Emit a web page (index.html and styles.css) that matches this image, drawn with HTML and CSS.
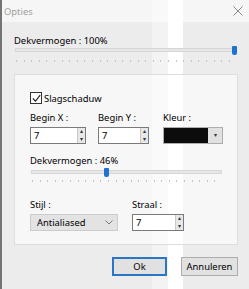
FILE: index.html
```html
<!DOCTYPE html>
<html>
<head>
    <title>Opties</title>
    <link rel="stylesheet" href="styles.css">
</head>
<body>
    <div class="window">
        <div class="titlebar">
            <span class="title">Opties</span>
            <svg class="close" width="10" height="10" viewBox="0 0 10 10">
                <path d="M0.5 0.5 L9.5 9.5 M9.5 0.5 L0.5 9.5" stroke="#8a8a8a" stroke-width="1" fill="none"/>
            </svg>
        </div>

        <div class="content">
            <div class="field-label">Dekvermogen : 100%</div>
            <div class="slider slider-wide">
                <div class="track"></div>
                <div class="thumb" style="left: 98%;"></div>
                <div class="ticks"></div>
            </div>

            <div class="group">
                <label class="check-row">
                    <span class="checkbox">
                        <svg width="9" height="9" viewBox="0 0 9 9">
                            <path d="M0.8 4.5 L3.5 7.2 L8.2 1.2" stroke="#222" stroke-width="1.1" fill="none"/>
                        </svg>
                    </span>
                    Slagschaduw
                </label>

                <div class="row">
                    <div class="col col-x">
                        <div class="field-label">Begin X :</div>
                        <div class="spin">
                            <span class="spin-value">7</span>
                            <span class="spin-buttons">
                                <span class="spin-btn">&#9652;</span>
                                <span class="spin-btn">&#9662;</span>
                            </span>
                        </div>
                    </div>
                    <div class="col col-y">
                        <div class="field-label">Begin Y :</div>
                        <div class="spin">
                            <span class="spin-value">7</span>
                            <span class="spin-buttons">
                                <span class="spin-btn">&#9652;</span>
                                <span class="spin-btn">&#9662;</span>
                            </span>
                        </div>
                    </div>
                    <div class="col col-color">
                        <div class="field-label">Kleur :</div>
                        <div class="color-pick">
                            <span class="swatch"></span>
                            <span class="color-arrow">&#9662;</span>
                        </div>
                    </div>
                </div>

                <div class="field-label label-opacity">Dekvermogen : 46%</div>
                <div class="slider slider-inner">
                    <div class="track"></div>
                    <div class="thumb" style="left: 38.5%;"></div>
                    <div class="ticks"></div>
                </div>

                <div class="row row-style">
                    <div class="col col-style">
                        <div class="field-label">Stijl :</div>
                        <div class="select">
                            <span>Antialiased</span>
                            <svg width="8" height="5" viewBox="0 0 8 5">
                                <path d="M0.5 0.5 L4 4 L7.5 0.5" stroke="#777" stroke-width="1" fill="none"/>
                            </svg>
                        </div>
                    </div>
                    <div class="col col-radius">
                        <div class="field-label">Straal :</div>
                        <div class="spin">
                            <span class="spin-value">7</span>
                            <span class="spin-buttons">
                                <span class="spin-btn">&#9652;</span>
                                <span class="spin-btn">&#9662;</span>
                            </span>
                        </div>
                    </div>
                </div>
            </div>

            <div class="buttons">
                <button class="btn btn-default">Ok</button>
                <button class="btn btn-cancel">Annuleren</button>
            </div>
        </div>
    </div>
</body>
</html>
```

FILE: styles.css
```css
* {
    box-sizing: border-box;
}

body {
    margin: 0;
    font-family: "Noto Sans", "Open Sans", sans-serif;
    font-size: 9.4px;
    color: #000;
    background-color: #f0f0f0;
}

.window {
    width: 249px;
    height: 289px;
    border-left: 2px solid #747474;
    background-color: #ececec;
    background-image: linear-gradient(to right,
        #ececec 150px, #f3f3f3 150px, #f3f3f3 166px,
        #ffffff 166px, #ffffff 181px, #ececec 181px);
    overflow: hidden;
}

.titlebar {
    height: 22px;
    display: flex;
    align-items: center;
    justify-content: space-between;
    padding: 0 6px 0 2px;
    background-color: rgba(255, 255, 255, 0.5);
}

.title {
    color: #a0a0a0;
}

.content {
    padding: 12px 0 0 12px;
}

.field-label {
    line-height: 14px;
    height: 14px;
}

.slider {
    position: relative;
    height: 16px;
}

.slider-wide {
    width: 222px;
}

.track {
    position: absolute;
    left: 1px;
    right: 0;
    top: 0;
    height: 4px;
    background-color: #e6e6e6;
    border: 1px solid #d6d6d6;
}

.thumb {
    position: absolute;
    top: -2px;
    width: 5px;
    height: 9px;
    background-color: #1e73d0;
    border-radius: 1px 1px 2px 2px;
}

.ticks {
    position: absolute;
    left: 2px;
    right: 0;
    top: 12px;
    height: 2px;
    background-image: repeating-linear-gradient(to right, #c4c4c4 0, #c4c4c4 1px, transparent 1px, transparent 7.6px);
}

.group {
    margin-top: 10px;
    width: 224px;
    height: 171px;
    padding: 17px 0 0 15px;
    background-color: rgba(255, 255, 255, 0.6);
    border: 1px solid #dedede;
}

.check-row {
    display: flex;
    align-items: center;
    gap: 2px;
    height: 12px;
}

.checkbox {
    width: 12px;
    height: 12px;
    border: 1px solid #333;
    background-color: #fff;
    display: flex;
    align-items: center;
    justify-content: center;
}

.row {
    display: flex;
    margin-top: 7px;
}

.col {
    display: flex;
    flex-direction: column;
    gap: 2px;
}

.col-x {
    width: 68px;
}

.col-y {
    width: 65px;
}

.spin {
    display: flex;
    height: 17px;
    border: 1px solid #7a7a7a;
    background-color: #fff;
}

.col-x .spin {
    width: 56px;
}

.col-y .spin {
    width: 51px;
}

.spin-value {
    flex: 1;
    padding-left: 3px;
    line-height: 15px;
}

.spin-buttons {
    width: 8px;
    display: flex;
    flex-direction: column;
    border-left: 1px solid #c8c8c8;
    background-color: #e8e8e8;
}

.spin-btn {
    flex: 1;
    font-size: 6px;
    line-height: 7px;
    text-align: center;
    color: #333;
}

.color-pick {
    display: flex;
    width: 60px;
    height: 17px;
    border: 1px solid #adadad;
    background-color: #e1e1e1;
}

.swatch {
    width: 44px;
    background-color: #0c0c0c;
}

.color-arrow {
    flex: 1;
    font-size: 6px;
    line-height: 15px;
    text-align: center;
    color: #333;
}

.label-opacity {
    margin-top: 10px;
}

.slider-inner {
    width: 192px;
    margin-top: 2px;
}

.slider-inner .ticks {
    top: 10px;
}

.row-style {
    margin-top: 12px;
}

.col-style {
    width: 102px;
}

.select {
    width: 88px;
    height: 17px;
    padding: 0 4px 0 6px;
    display: flex;
    align-items: center;
    justify-content: space-between;
    border: 1px solid #cccccc;
    background-color: #e3e3e3;
}

.col-radius .spin {
    width: 52px;
}

.buttons {
    display: flex;
    justify-content: flex-end;
    gap: 14px;
    margin-top: 12px;
    width: 224px;
}

.btn {
    height: 19px;
    padding: 0;
    font-family: "Noto Sans", "Open Sans", sans-serif;
    font-size: 9.4px;
    color: #000;
    background-color: #e1e1e1;
    border: 1px solid #adadad;
}

.btn-default {
    width: 55px;
    border: 2px solid #2a75c4;
}

.btn-cancel {
    width: 57px;
}
```
